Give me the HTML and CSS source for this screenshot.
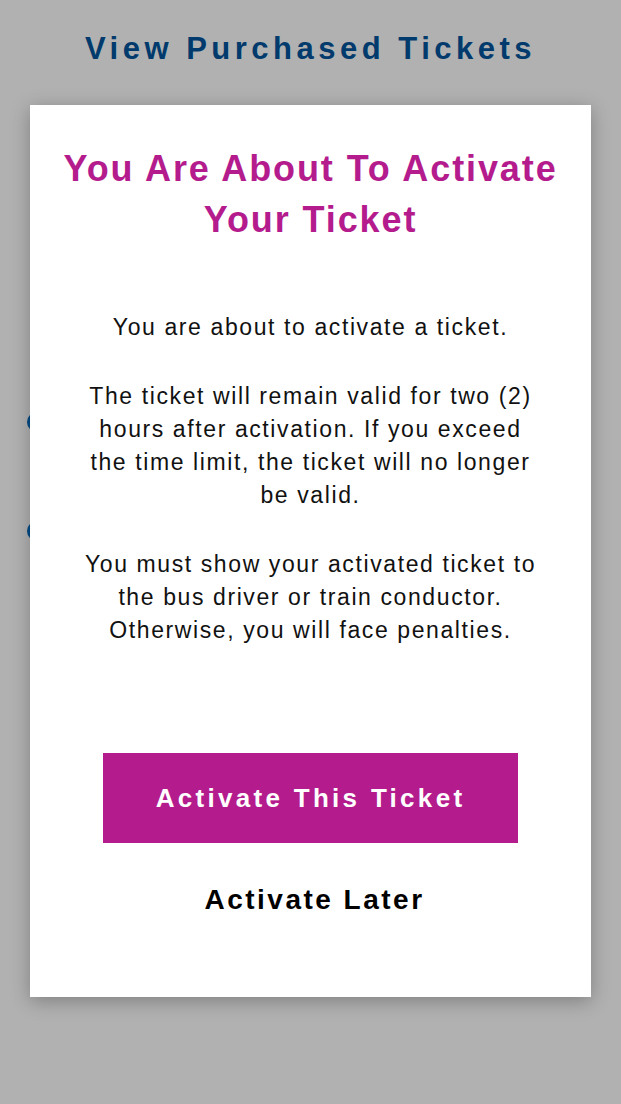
FILE: index.html
```html
<!DOCTYPE html>
<html lang="en">
<head>
<meta charset="utf-8">
<title>View Purchased Tickets</title>
<link rel="stylesheet" href="styles.css">
</head>
<body>
<div class="page">
  <h1 class="page-title">View Purchased Tickets</h1>
  <ul class="ticket-list">
    <li class="ticket-item"><span class="radio" aria-label="Ticket 1"></span></li>
    <li class="ticket-item"><span class="radio" aria-label="Ticket 2"></span></li>
  </ul>
</div>
<div class="dialog" role="dialog" aria-modal="true">
  <h2 class="dialog-title">You Are About To Activate Your Ticket</h2>
  <div class="dialog-body">
    <p>You are about to activate a ticket.</p>
    <p>The ticket will remain valid for two (2) hours after activation. If you exceed the time limit, the ticket will no longer be valid.</p>
    <p>You must show your activated ticket to the bus driver or train conductor. Otherwise, you will face penalties.</p>
  </div>
  <div class="dialog-actions">
    <button class="btn-primary" type="button">Activate This Ticket</button>
    <button class="btn-link" type="button">Activate Later</button>
  </div>
</div>
</body>
</html>
```

FILE: styles.css
```css
html, body {
  margin: 0;
  padding: 0;
}
body {
  background: #b1b1b1;
  font-family: "Liberation Sans", Arial, Helvetica, sans-serif;
  width: 621px;
  height: 1104px;
  overflow: hidden;
  position: relative;
}
.page {
  padding-top: 31px;
}
.page-title {
  margin: 0;
  text-align: center;
  font-size: 31px;
  line-height: 36px;
  font-weight: 700;
  letter-spacing: 4.5px;
  color: #013a6c;
}
.ticket-list {
  list-style: none;
  margin: 0;
  padding: 0 0 0 27px;
  margin-top: 345px;
  display: flex;
  flex-direction: column;
  gap: 89px;
}
.ticket-item {
  display: flex;
  align-items: center;
  height: 20px;
}
.radio {
  width: 20px;
  height: 20px;
  border-radius: 50%;
  background: #004a87;
  flex: none;
}
.dialog {
  position: absolute;
  left: 30px;
  top: 105px;
  width: 561px;
  height: 892px;
  box-sizing: border-box;
  background: #fff;
  box-shadow: 0 4px 18px rgba(0, 0, 0, 0.28);
  padding: 38px 20px 0;
  display: flex;
  flex-direction: column;
  align-items: center;
}
.dialog-title {
  margin: 0;
  text-align: center;
  color: #b41b8d;
  font-size: 36px;
  line-height: 51px;
  font-weight: 700;
  letter-spacing: 1.9px;
}
.dialog-body {
  margin-top: 66px;
  width: 458px;
  text-align: center;
  color: #111;
  font-size: 23px;
  line-height: 33px;
  letter-spacing: 1.6px;
}
.dialog-body p {
  margin: 0;
}
.dialog-body p + p {
  margin-top: 36px;
}
.dialog-actions {
  margin-top: 106px;
  display: flex;
  flex-direction: column;
  align-items: center;
}
.btn-primary {
  width: 415px;
  height: 90px;
  border: 0;
  background: #b41b8d;
  color: #fff;
  font-family: inherit;
  font-size: 26px;
  font-weight: 700;
  letter-spacing: 3.3px;
  cursor: pointer;
}
.btn-link {
  margin-top: 39px;
  border: 0;
  background: none;
  padding: 0 0 0 8px;
  color: #000;
  font-family: inherit;
  font-size: 28px;
  line-height: 36px;
  font-weight: 700;
  letter-spacing: 2.5px;
  cursor: pointer;
}
```
